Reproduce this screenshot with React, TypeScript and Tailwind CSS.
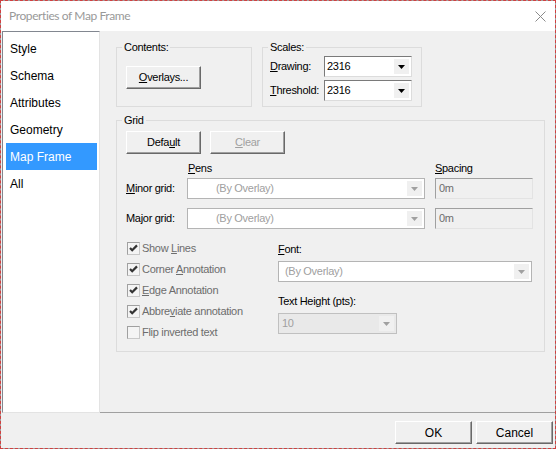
import React from "react";

const navItems = ["Style", "Schema", "Attributes", "Geometry", "Map Frame", "All"];

function Arrow({ color = "#000" }: { color?: string }) {
  return (
    <svg width="7" height="4" viewBox="0 0 7 4">
      <path d="M0 0h7L3.5 4z" fill={color} />
    </svg>
  );
}

function Button({ children, disabled, className = "" }: { children: React.ReactNode; disabled?: boolean; className?: string }) {
  return (
    <div
      className={`flex items-center justify-center h-[23px] bg-[#f0f0f0] border border-t-white border-l-white border-r-[#696969] border-b-[#696969] shadow-[inset_-1px_-1px_0_#a0a0a0] ${
        disabled ? "text-[#a0a0a0]" : "text-black"
      } ${className}`}
    >
      {children}
    </div>
  );
}

function Group({ label, className = "", children }: { label: string; className?: string; children?: React.ReactNode }) {
  return (
    <div className={`relative border border-[#dcdcdc] ${className}`}>
      <span className="absolute -top-[8px] left-[5px] px-[2px] bg-[#f0f0f0] leading-[14px] text-black">{label}</span>
      {children}
    </div>
  );
}

function Check({ checked, children }: { checked?: boolean; children: React.ReactNode }) {
  return (
    <div className="flex items-center h-[21px] pl-px gap-[2px] text-[#6d6d6d]">
      <div className="w-[13px] h-[13px] bg-[#f4f4f4] border border-t-[#a0a0a0] border-l-[#a0a0a0] border-r-[#c8c8c8] border-b-[#c8c8c8] flex items-center justify-center">
        {checked && (
          <svg width="9" height="9" viewBox="0 0 9 9">
            <path d="M1 4l2.2 2.2L8 1.4" stroke="#333333" strokeWidth="2.2" fill="none" />
          </svg>
        )}
      </div>
      <span>{children}</span>
    </div>
  );
}

function FlatCombo({ text, className = "", textPad = "pl-[28px]" }: { text: string; className?: string; textPad?: string }) {
  return (
    <div className={`flex items-center h-[21px] bg-white border border-[#b4b4b4] ${className}`}>
      <span className={`flex-1 text-[#a0a0a0] ${textPad}`}>{text}</span>
      <div className="w-[15px] h-[15px] mr-[2px] bg-[#f0f0f0] flex items-center justify-center">
        <Arrow color="#a0a0a0" />
      </div>
    </div>
  );
}

function ScaleCombo({ value }: { value: string }) {
  return (
    <div className="flex items-center w-[88px] h-[21px] bg-white border border-t-[#7a7a7a] border-l-[#7a7a7a] border-r-[#dcdcdc] border-b-[#dcdcdc]">
      <span className="flex-1 pl-[2px] text-black">{value}</span>
      <div className="w-[15px] h-[15px] mr-[2px] bg-[#f0f0f0] flex items-center justify-center">
        <Arrow />
      </div>
    </div>
  );
}

function SpacingField() {
  return (
    <div className="w-[98px] h-[21px] flex items-center pl-[3px] bg-[#f0f0f0] border border-t-[#a0a0a0] border-l-[#a0a0a0] border-r-[#e3e3e3] border-b-[#e3e3e3] text-[#6d6d6d]">
      0m
    </div>
  );
}

export default function App() {
  return (
    <div className="w-[556px] h-[449px] bg-[#a0a0a0] border border-dashed border-[#d04040] flex flex-col overflow-hidden [font-family:'Liberation_Sans',Arial,sans-serif] text-[11px] tracking-[-0.3px]">
      {/* Title bar */}
      <div className="h-[30px] bg-white flex items-center pl-[8px] pr-[9px] shrink-0">
        <span className="[font-family:Lato,'Liberation_Sans',sans-serif] text-[12px] tracking-[-0.4px] text-[#999999]">
          Properties of Map Frame
        </span>
        <svg className="ml-auto" width="11" height="11" viewBox="0 0 11 11">
          <path d="M0.5 0.5l10 10M10.5 0.5l-10 10" stroke="#8a8a8a" strokeWidth="1" />
        </svg>
      </div>

      {/* Body */}
      <div className="flex-1 flex bg-[#f0f0f0] pl-px">
        <div className="w-[98px] bg-white border border-t-[#828790] border-l-[#828790] border-r-[#e3e3e3] border-b-[#e3e3e3] pt-[3px] pl-[3px] pr-[2px] text-[12px] tracking-normal">
          {navItems.map((item) => (
            <div
              key={item}
              className={`h-[27px] flex items-center pl-[4px] ${
                item === "Map Frame" ? "bg-[#3399ff] text-white" : "text-black"
              }`}
            >
              {item}
            </div>
          ))}
        </div>

        <div className="flex-1 border-b border-[#a0a0a0] pl-[16px] pt-[16px]">
          <div className="flex gap-[10px]">
            <Group label="Contents:" className="w-[136px] h-[60px] pl-[9px] pt-[18px]">
              <Button className="w-[75px]">
                <span>
                  <u>O</u>verlays...
                </span>
              </Button>
            </Group>
            <Group label="Scales:" className="w-[160px] h-[60px] pl-[7px] pt-[8px] flex flex-col gap-[3px]">
              <div className="flex items-center">
                <span className="w-[54px]">
                  <u>D</u>rawing:
                </span>
                <ScaleCombo value="2316" />
              </div>
              <div className="flex items-center">
                <span className="w-[54px]">
                  <u>T</u>hreshold:
                </span>
                <ScaleCombo value="2316" />
              </div>
            </Group>
          </div>

          <Group label="Grid" className="mt-[13px] w-[429px] h-[232px] pl-[9px] pt-[10px]">
            <div className="flex gap-[9px]">
              <Button className="w-[75px]">
                <span>
                  Defa<u>u</u>lt
                </span>
              </Button>
              <Button disabled className="w-[75px]">
                <span>
                  <u>C</u>lear
                </span>
              </Button>
            </div>

            <div className="flex mt-[7px] h-[14px] leading-[14px]">
              <span className="ml-[62px] w-[247px]">
                <u>P</u>ens
              </span>
              <span>
                <u>S</u>pacing
              </span>
            </div>

            <div className="flex items-center mt-[3px] h-[21px]">
              <span className="w-[61px]">
                <u>M</u>inor grid:
              </span>
              <FlatCombo text="(By Overlay)" className="w-[238px]" />
              <div className="ml-[10px]">
                <SpacingField />
              </div>
            </div>
            <div className="flex items-center mt-[9px] h-[21px]">
              <span className="w-[61px]">Major grid:</span>
              <FlatCombo text="(By Overlay)" className="w-[238px]" />
              <div className="ml-[10px]">
                <SpacingField />
              </div>
            </div>

            <div className="flex mt-[9px]">
              <div className="w-[152px]">
                <Check checked>
                  Show <u>L</u>ines
                </Check>
                <Check checked>
                  Corner <u>A</u>nnotation
                </Check>
                <Check checked>
                  <u>E</u>dge Annotation
                </Check>
                <Check checked>
                  Abbre<u>v</u>iate annotation
                </Check>
                <Check>Flip inverted text</Check>
              </div>
              <div className="pt-[4px] flex flex-col">
                <span className="h-[14px] leading-[14px]">
                  <u>F</u>ont:
                </span>
                <FlatCombo text="(By Overlay)" className="w-[254px] mt-[5px]" textPad="pl-[6px]" />
                <span className="h-[14px] leading-[14px] mt-[12px]">
                  Text Hei<u>g</u>ht (pts):
                </span>
                <div className="flex items-center w-[119px] h-[21px] mt-[5px] bg-[#e9e9e9] border border-[#c0c0c0]">
                  <span className="flex-1 pl-[3px] text-[#a0a0a0]">10</span>
                  <div className="w-[15px] h-[15px] mr-[2px] bg-[#f0f0f0] flex items-center justify-center">
                    <Arrow color="#a0a0a0" />
                  </div>
                </div>
              </div>
            </div>
          </Group>
        </div>
      </div>

      {/* Footer */}
      <div className="h-[35px] shrink-0 bg-[#f0f0f0] flex justify-end items-start pt-[8px] pr-[2px] gap-[4px] text-[12px] tracking-normal">
        <Button className="w-[77px] h-[22px]">OK</Button>
        <Button className="w-[77px] h-[22px]">Cancel</Button>
      </div>
    </div>
  );
}
